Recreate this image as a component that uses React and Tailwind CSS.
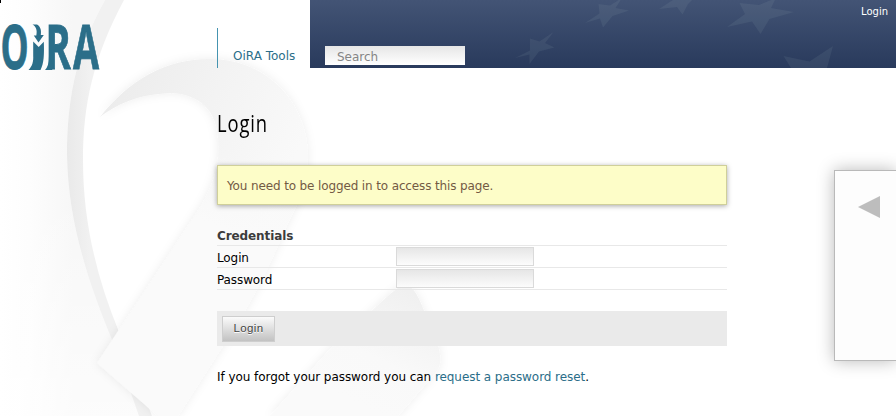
import React from "react";

function Ribbon() {
  return (
    <svg className="pointer-events-none absolute inset-0 -z-10" width="896" height="416" viewBox="0 0 896 416" aria-hidden="true">
      <defs>
        <linearGradient id="side" x1="0" y1="0" x2="1" y2="0">
          <stop offset="0" stopColor="#ffffff" />
          <stop offset="0.2" stopColor="#fdfdfd" />
          <stop offset="0.5" stopColor="#f7f7f7" />
          <stop offset="1" stopColor="#f7f7f7" />
        </linearGradient>
        <linearGradient id="sideFade" x1="0" y1="0" x2="0" y2="1">
          <stop offset="0.45" stopColor="#ffffff" stopOpacity="0" />
          <stop offset="1" stopColor="#ffffff" stopOpacity="0.6" />
        </linearGradient>
        <linearGradient id="band" gradientUnits="userSpaceOnUse" x1="66" y1="0" x2="90" y2="0">
          <stop offset="0" stopColor="#e9e9e9" />
          <stop offset="1" stopColor="#f1f1f1" />
        </linearGradient>
        <linearGradient id="loop" gradientUnits="userSpaceOnUse" x1="110" y1="90" x2="290" y2="170">
          <stop offset="0" stopColor="#ececec" />
          <stop offset="0.5" stopColor="#f3f3f3" />
          <stop offset="1" stopColor="#f9f9f9" />
        </linearGradient>
        <linearGradient id="tail" gradientUnits="userSpaceOnUse" x1="240" y1="160" x2="215" y2="225">
          <stop offset="0" stopColor="#fafafa" stopOpacity="0" />
          <stop offset="1" stopColor="#fafafa" />
        </linearGradient>
        <linearGradient id="second" gradientUnits="userSpaceOnUse" x1="405" y1="290" x2="350" y2="400">
          <stop offset="0" stopColor="#f0f0f0" />
          <stop offset="0.6" stopColor="#f9f9f9" />
          <stop offset="1" stopColor="#fafafa" />
        </linearGradient>
        <filter id="glow" x="-20%" y="-20%" width="140%" height="140%">
          <feDropShadow dx="0" dy="0" stdDeviation="5" floodColor="#000000" floodOpacity="0.07" />
        </filter>
      </defs>
      <path d="M0 0H105C74 55 67 105 67 155C68 220 87 280 113 342L145 416H0Z" fill="url(#side)" />
      <path d="M0 0H105C74 55 67 105 67 155C68 220 87 280 113 342L145 416H0Z" fill="url(#sideFade)" />
      <path d="M105 0H124C93 58 83 105 83 160C83 220 96 276 119 332L152 416H139L113 342C87 280 68 220 67 155C67 105 74 55 105 0Z" fill="url(#band)" />
      <path d="M403 284C414 284 420 300 427 318C438 342 445 360 437 371L398 416H270L333 346C365 318 386 296 403 284Z" fill="url(#second)" filter="url(#glow)" />
      <path
        d="M100 117C130 79 168 58 212 59C270 60 307 105 308 155C308 181 302 196 287 225C270 265 251 305 219 352L178 416H158L97 363L201 206C215 182 220 163 218 138C216 110 200 95 172 93C143 94 121 101 100 117Z"
        fill="url(#loop)"
        filter="url(#glow)"
      />
      <path d="M218 138L308 155C308 181 302 196 287 225C270 265 251 305 219 352L178 416H158L97 363L201 206C215 182 220 163 218 138Z" fill="url(#tail)" />
    </svg>
  );
}

function Logo() {
  return (
    <svg className="block" width="110" height="100" viewBox="0 0 110 100" role="img" aria-label="OiRA">
      <g fill="#2b6e89" stroke="#2b6e89" strokeWidth="0.8" fontFamily="'Open Sans', sans-serif" fontWeight="700" fontSize="61">
        <text transform="translate(0.5 69.3) scale(.58 1)">O</text>
        <text transform="translate(45.5 69.3) scale(.63 1)">R</text>
        <text transform="translate(73 69.3) scale(.62 1)">A</text>
      </g>
      <path d="M32.500 24.500H37C40.500 26.500 41.500 30 40.800 35H43.800L38.500 42.500L33.800 35.500H36.300C37.500 30 36 26.500 32.500 24.500Z" fill="#2b6e89" />
      <path d="M33.200 41.500L38.700 47L43.800 41.700C44.300 54 44 63 40.500 70H28.500C32.500 66 33.500 61 33.200 56Z" fill="#2b6e89" />
      <path d="M49 56Q49 66 45 70H52L54 66Z" fill="#2b6e89" />
    </svg>
  );
}

function Stars() {
  return (
    <svg className="absolute inset-0" width="586" height="68" viewBox="310 0 586 68" fill="#b4c8c8" fillOpacity="0.09" aria-hidden="true">
      <path d="M553.500 32L545 43L554.500 47.500L539 51.500L529.500 64L529.500 54.500L515 58L530 50.500V38.500L539.500 41.500Z" />
      <path d="M622 -2L615.500 8L629 10.500L612.500 16L603 27.500L600 18.500L585 23L599.500 13.500L598.500 4L610 5.500Z" />
      <path d="M692 0L688 4L682.500 14.500L677 7L659 9L673 0Z" />
      <path d="M776 -2L771 8L794 12L769.500 19L760.500 34L752 21.500L727 27L745 14L739.500 3L759 5Z" />
      <path d="M833 46L827 68H791L783.500 56L809.500 61.500Z" />
    </svg>
  );
}

function Header() {
  return (
    <header className="flex h-[68px]">
      <div className="w-[217px] shrink-0">
        <Logo />
      </div>
      <nav className="mt-7 flex h-10 w-[93px] shrink-0 items-end border-l border-[#4594b0] pb-1 pl-[15px]">
        <a className="text-[12px] leading-4 whitespace-nowrap text-[#2b6e89]">OiRA Tools</a>
      </nav>
      <div className="relative flex flex-1 items-start justify-between bg-linear-to-b from-[#435475] to-[#293a5c] pl-[15px]">
        <Stars />
        <input
          type="text"
          placeholder="Search"
          className="relative mt-[46px] h-[19px] w-[140px] bg-linear-to-b from-[#e6e6e6] to-white pt-[2px] pl-3 text-[12px] leading-4 outline-none placeholder:text-[#858585]"
        />
        <a className="relative mt-[5px] mr-2 text-[10px] leading-[14px] text-white">Login</a>
      </div>
    </header>
  );
}

function Field({ label, type }) {
  return (
    <label className="flex h-[22px] items-center border-b border-[#e8e8e8]">
      <span className="w-[179px] pt-[3px] leading-4 tracking-[-0.1px]">{label}</span>
      <input type={type} className="h-[19px] w-[138px] border border-[#dadada] bg-linear-to-b from-[#e6e6e6] to-[#fcfcfc] outline-none" />
    </label>
  );
}

export default function App() {
  return (
    <div className="relative isolate h-[416px] w-[896px] overflow-hidden bg-white font-['DejaVu_Sans',sans-serif] text-[12px] text-black">
      <Ribbon />
      <span className="absolute top-0 left-0 h-[3px] w-px bg-black" />
      <Header />
      <div className="flex items-start justify-between pl-[217px]">
        <main className="w-[510px] pt-[38px]">
          <h1 className="h-[34px] origin-left scale-x-[0.8] font-['Open_Sans',sans-serif] text-[23px] leading-[34px] tracking-[1.1px]">Login</h1>
          <p className="mt-[25px] h-10 border border-[#cfcf9a] bg-[#fdfdc8] pt-3 pl-[9px] leading-4 tracking-[-0.13px] text-[#735a44] shadow-[0_1px_5px_rgba(0,0,0,0.35)]">
            You need to be logged in to access this page.
          </p>
          <form className="mt-[23px]">
            <h2 className="h-[18px] border-b border-[#e8e8e8] text-[12px] leading-4 font-bold tracking-[-0.1px] text-[#3c3c3c]">Credentials</h2>
            <Field label="Login" type="text" />
            <Field label="Password" type="password" />
            <div className="mt-[21px] flex h-[35px] items-center bg-[#eaeaea] pt-px pl-[5px]">
              <button type="button" className="h-[26px] w-[53px] border border-[#cecece] bg-linear-to-b from-[#fbfbfb] to-[#c2c2c2] font-['Liberation_Sans',sans-serif] text-[11.5px] tracking-[0.4px] text-[#444] [text-shadow:0_1px_0_#fff]">
                Login
              </button>
            </div>
          </form>
          <p className="mt-[23px] leading-4 tracking-[-0.06px] whitespace-nowrap">
            If you forgot your password you can <a className="text-[#2b6e89]">request a password reset</a>.
          </p>
        </main>
        <aside className="mt-[102px] h-[191px] w-[62px] border border-r-0 border-[#b9b9b9] bg-[#fdfdfd] pt-[25px] pl-[23px] shadow-[0_0_16px_rgba(0,0,0,0.28)]">
          <svg width="22" height="22" viewBox="0 0 22 22" fill="#bdbdbd" aria-hidden="true">
            <path d="M0 11L22 0V22Z" />
          </svg>
        </aside>
      </div>
    </div>
  );
}
